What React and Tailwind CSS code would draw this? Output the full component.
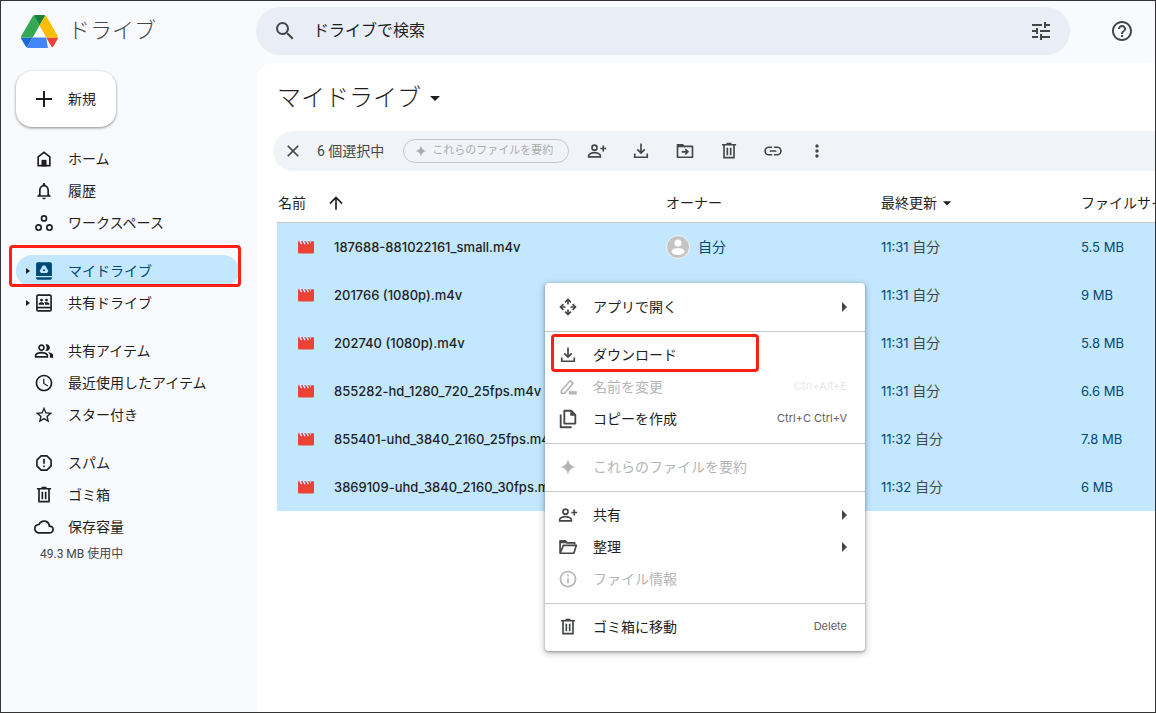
import { useState } from "react";
import clsx from "clsx";
import {
  MdSearch,
  MdTune,
  MdHelpOutline,
  MdNotificationsNone,
  MdAccessTime,
  MdStarBorder,
  MdCloudQueue,
  MdClose,
  MdArrowUpward,
  MdMoreVert,
  MdInfoOutline,
  MdArrowDropDown,
} from "react-icons/md";

function Svg({ size = 20, children }) {
  return (
    <svg
      width={size}
      height={size}
      viewBox="0 0 24 24"
      fill="none"
      stroke="currentColor"
      strokeWidth="2"
      className="shrink-0"
      aria-hidden="true"
    >
      {children}
    </svg>
  );
}

const HomeIcon = () => (
  <Svg>
    <path d="M5 20V9.500L12 4l7 5.500V20z" />
    <path d="M9 21v-8h6v8z" fill="currentColor" stroke="none" />
  </Svg>
);

const WorkspaceIcon = () => (
  <Svg>
    <circle cx="12" cy="6.500" r="3" />
    <circle cx="5.500" cy="17.500" r="3.200" />
    <circle cx="18.500" cy="17.500" r="3.200" />
  </Svg>
);

const MyDriveIcon = () => (
  <Svg>
    <path
      d="M4.500 1.500h15a2 2 0 0 1 2 2V18h-19V3.500a2 2 0 0 1 2-2zM10.500 5.500L6.800 12l1.500 2.500h7.400l1.500-2.500-3.700-6.500zM12 9.200l1.600 2.800h-3.200z"
      fill="currentColor"
      fillRule="evenodd"
      stroke="none"
    />
    <path
      d="M2.500 19.500h19v1a2 2 0 0 1-2 2h-15a2 2 0 0 1-2-2z"
      fill="currentColor"
      stroke="none"
    />
  </Svg>
);

const SharedDriveIcon = () => (
  <Svg>
    <rect x="3.500" y="2.500" width="17" height="19" rx="1.500" />
    <path d="M3.500 17.500h17" />
    <g fill="currentColor" stroke="none">
      <circle cx="9" cy="8.500" r="1.700" />
      <circle cx="15" cy="8.500" r="1.700" />
      <path d="M5.500 14v-1c0-1.300 2-2 3.500-2s3 .7 3 2v1zM13 14v-1c0-.8-.3-1.300-.8-1.800.9-.2 1.800-.2 2.800-.2 1.500 0 3.500.7 3.500 2v1z" />
    </g>
  </Svg>
);

const PeopleIcon = () => (
  <Svg>
    <path
      stroke="none"
      fill="currentColor"
      d="M16.670 13.130C18.040 14.060 19 15.320 19 17v3h4v-3c0-2.180-3.570-3.470-6.330-3.870zM15 12c2.210 0 4-1.790 4-4s-1.790-4-4-4c-.47 0-.91.1-1.330.24a5.980 5.980 0 0 1 0 7.520c.42.14.86.24 1.330.24zM9 12c2.210 0 4-1.790 4-4s-1.790-4-4-4-4 1.790-4 4 1.790 4 4 4zm0-6c1.100 0 2 .9 2 2s-.9 2-2 2-2-.9-2-2 .9-2 2-2zM9 13c-2.670 0-8 1.340-8 4v3h16v-3c0-2.660-5.330-4-8-4zm6 5H3v-.99C3.200 16.290 6.300 15 9 15s5.800 1.290 6 2v1z"
    />
  </Svg>
);

const SpamIcon = () => (
  <Svg>
    <path d="M8.500 3.500h7l5 5v7l-5 5h-7l-5-5v-7z" strokeLinejoin="round" />
    <path d="M12 7v6M12 15v2.200" />
  </Svg>
);

const TrashIcon = () => (
  <Svg>
    <path d="M3.500 4.500h17M9 3h6M6 5v15h12V5M10 8v9M14 8v9" />
  </Svg>
);

const PersonAddIcon = () => (
  <Svg>
    <circle cx="9" cy="8" r="3" />
    <path d="M2 19v-1.500C2 15.300 6 14 9 14s7 1.300 7 3.500V19z" />
    <path d="M19.500 5.500v7M16 9h7" />
  </Svg>
);

const DownloadIcon = () => (
  <Svg>
    <path d="M12 3v11M7.500 10l4.500 4.500 4.500-4.500M4.500 15v4.500h15V15" />
  </Svg>
);

const MoveIcon = () => (
  <Svg>
    <path d="M3 6v13.500h18V6.500H11L9 4.500H3z" strokeLinejoin="round" />
    <path d="M2.500 4h7l2.500 3.500H2.500z" fill="currentColor" stroke="none" />
    <path d="M8 13h7M12.300 9.800l3.200 3.200-3.200 3.200" />
  </Svg>
);

const LinkIcon = () => (
  <Svg>
    <path d="M11 7.500H7a4.500 4.500 0 0 0 0 9h4M13 7.500h4a4.500 4.500 0 0 1 0 9h-4M8 12h8" />
  </Svg>
);

const SparkIcon = ({ size = 20 }) => (
  <Svg size={size}>
    <path
      d="M12 2c.7 6 4 9.300 10 10-6 .7-9.300 4-10 10-.7-6-4-9.300-10-10 6-.7 9.300-4 10-10z"
      fill="currentColor"
      stroke="none"
    />
  </Svg>
);

const OpenWithIcon = () => (
  <Svg>
    <path d="M8.500 6.500L12 3l3.500 3.500M8.500 17.500L12 21l3.500-3.500M6.500 8.500L3 12l3.500 3.500M17.500 8.500L21 12l-3.500 3.500" />
    <path d="M12 3.500V9M12 15v5.500M3.500 12H9M15 12h5.500" />
  </Svg>
);

const RenameIcon = () => (
  <Svg>
    <path d="M4 19.500v-3L14.500 4.500l3.500 3L8 19.500z" strokeLinejoin="round" />
    <path d="M13 19h9.500" strokeWidth="4" />
  </Svg>
);

const CopyIcon = () => (
  <Svg size={22}>
    <path d="M8 3h7.500L20 7.500V17H8z" strokeLinejoin="round" />
    <path d="M14.500 3v5.500H20z" fill="currentColor" stroke="none" />
    <path d="M4 7v14h12" strokeLinejoin="round" />
  </Svg>
);

const FolderOpenIcon = () => (
  <Svg>
    <path d="M2.500 19V5h6.500l2 2H20v2" strokeLinejoin="round" />
    <path d="M2.500 19.500L6.500 10H22l-3 9.500z" strokeLinejoin="round" />
    <path d="M2 4h7l2.500 3.500H2z" fill="currentColor" stroke="none" />
  </Svg>
);

const MovieIcon = () => (
  <svg width="18" height="18" viewBox="0 0 18 18" aria-hidden="true">
    <path
      fill="#ea4335"
      d="M1 3.200h1.200l1.600 3h1.600l-1.600-3h1.800l1.600 3h1.600l-1.600-3h1.800l1.600 3h1.600l-1.600-3h1.800l1 2h.8l-1-2H17V14.200a1.300 1.300 0 0 1-1.300 1.300H2.300A1.300 1.300 0 0 1 1 14.200z"
    />
  </svg>
);

const DriveLogo = () => (
  <svg width="37" height="33" viewBox="0 0 87.3 78" aria-hidden="true">
    <path fill="#1967d2" d="m6.600 66.850 3.850 6.650c.8 1.400 1.950 2.500 3.300 3.300l13.750-23.800h-27.500c0 1.550.4 3.100 1.200 4.500z" />
    <path fill="#34a853" d="m43.650 25-13.750-23.800c-1.350.8-2.500 1.900-3.300 3.300l-25.400 44a9.060 9.060 0 0 0 -1.200 4.500h27.500z" />
    <path fill="#ea4335" d="m73.550 76.800c1.350-.8 2.500-1.900 3.300-3.300l1.600-2.750 7.650-13.250c.8-1.400 1.200-2.950 1.200-4.500h-27.502l5.852 11.500z" />
    <path fill="#188038" d="m43.650 25 13.750-23.800c-1.350-.8-2.900-1.200-4.500-1.200h-18.500c-1.600 0-3.150.45-4.500 1.200z" />
    <path fill="#4285f4" d="m59.800 53h-32.300l-13.750 23.800c1.350.8 2.900 1.200 4.500 1.200h45.200z" />
    <path fill="#fbbc04" d="m73.400 26.500-12.700-22c-.8-1.400-1.950-2.500-3.300-3.300l-13.750 23.800 16.150 28h27.450c0-1.550-.4-3.100-1.200-4.500z" />
  </svg>
);

const Caret = ({ className }) => (
  <svg viewBox="0 0 5 10" preserveAspectRatio="none" className={className} fill="currentColor" aria-hidden="true">
    <path d="M0 0l5 5-5 5z" />
  </svg>
);

const navGroups = [
  [
    { label: "ホーム", icon: <HomeIcon /> },
    { label: "履歴", icon: <MdNotificationsNone size={20} /> },
    { label: "ワークスペース", icon: <WorkspaceIcon /> },
  ],
  [
    { label: "マイドライブ", icon: <MyDriveIcon />, expandable: true, marked: true },
    { label: "共有ドライブ", icon: <SharedDriveIcon />, expandable: true },
  ],
  [
    { label: "共有アイテム", icon: <PeopleIcon /> },
    { label: "最近使用したアイテム", icon: <MdAccessTime size={20} /> },
    { label: "スター付き", icon: <MdStarBorder size={20} /> },
  ],
  [
    { label: "スパム", icon: <SpamIcon /> },
    { label: "ゴミ箱", icon: <TrashIcon /> },
    { label: "保存容量", icon: <MdCloudQueue size={20} /> },
  ],
];

const files = [
  { name: "187688-881022161_small.m4v", time: "11:31", size: "5.5 MB", owner: true },
  { name: "201766 (1080p).m4v", time: "11:31", size: "9 MB" },
  { name: "202740 (1080p).m4v", time: "11:31", size: "5.8 MB" },
  { name: "855282-hd_1280_720_25fps.m4v", time: "11:31", size: "6.6 MB" },
  { name: "855401-uhd_3840_2160_25fps.m4v", time: "11:32", size: "7.8 MB" },
  { name: "3869109-uhd_3840_2160_30fps.m4v", time: "11:32", size: "6 MB" },
];

const tools = [
  { label: "共有", icon: <PersonAddIcon /> },
  { label: "ダウンロード", icon: <DownloadIcon /> },
  { label: "移動", icon: <MoveIcon /> },
  { label: "削除", icon: <TrashIcon /> },
  { label: "リンクをコピー", icon: <LinkIcon /> },
  { label: "その他の操作", icon: <MdMoreVert size={20} /> },
];

const menuGroups = [
  [{ label: "アプリで開く", icon: <OpenWithIcon />, submenu: true }],
  [
    { label: "ダウンロード", icon: <DownloadIcon />, marked: true },
    { label: "名前を変更", icon: <RenameIcon />, keys: "Ctrl+Alt+E", disabled: true },
    { label: "コピーを作成", icon: <CopyIcon />, keys: "Ctrl+C Ctrl+V" },
  ],
  [{ label: "これらのファイルを要約", icon: <SparkIcon />, disabled: true }],
  [
    { label: "共有", icon: <PersonAddIcon />, submenu: true },
    { label: "整理", icon: <FolderOpenIcon />, submenu: true },
    { label: "ファイル情報", icon: <MdInfoOutline size={20} />, disabled: true },
  ],
  [{ label: "ゴミ箱に移動", icon: <TrashIcon />, keys: "Delete" }],
];

function Header() {
  return (
    <header className="flex h-[62px] shrink-0 items-start pt-1.5">
      <a
        href="#"
        className="flex h-12 w-[255px] shrink-0 items-center gap-2.5 pl-5 text-[22px] font-light text-[#444746]"
      >
        <DriveLogo />
        ドライブ
      </a>
      <form
        role="search"
        onSubmit={(e) => e.preventDefault()}
        className="flex h-12 flex-1 items-center rounded-full bg-[#e9eef6] pr-[17px] pl-[17px] text-[#444746]"
      >
        <button type="submit" aria-label="検索">
          <MdSearch size={24} />
        </button>
        <input
          type="text"
          aria-label="ドライブで検索"
          placeholder="ドライブで検索"
          className="ml-4 min-w-0 flex-1 bg-transparent text-base outline-none placeholder:text-[#1f1f1f]"
        />
        <button type="button" aria-label="検索オプション">
          <MdTune size={24} />
        </button>
      </form>
      <div className="flex h-12 w-[85px] shrink-0 items-center pl-10 text-[#444746]">
        <button type="button" aria-label="サポート">
          <MdHelpOutline size={24} />
        </button>
      </div>
    </header>
  );
}

function Sidebar({ active, onSelect }) {
  return (
    <aside className="w-64 shrink-0 pt-2 pl-[15px] pr-[18px]">
      <button
        type="button"
        className="mb-4 flex h-14 w-[100px] items-center gap-3 rounded-2xl bg-white pl-4 shadow-[0_1px_3px_rgba(0,0,0,0.45)]"
      >
        <Svg size={24}>
          <path d="M12 4v16M4 12h16" />
        </Svg>
        新規
      </button>
      <nav className="flex flex-col gap-4">
        {navGroups.map((group, i) => (
          <ul key={i}>
            {group.map((item) => (
              <li key={item.label} className="relative">
                <a
                  href="#"
                  onClick={() => onSelect(item.label)}
                  className={clsx(
                    "flex h-8 items-center rounded-full pl-2.5",
                    active === item.label && "bg-[#c2e7ff] text-[#004a77]"
                  )}
                >
                  <span className="w-2 shrink-0">
                    {item.expandable && <Caret className="h-1.5 w-1 text-[#1f1f1f]" />}
                  </span>
                  <span className="mr-3.5 flex w-5 shrink-0 justify-center">{item.icon}</span>
                  {item.label}
                </a>
                {item.marked && (
                  <span className="pointer-events-none absolute -top-2.5 -right-0.5 bottom-0 -left-[7px] rounded border-[3px] border-[#ff1f14]" />
                )}
              </li>
            ))}
          </ul>
        ))}
      </nav>
      <p className="pt-px pl-6 text-xs leading-5 text-[#444746]">49.3 MB 使用中</p>
    </aside>
  );
}

function SelectionBar() {
  return (
    <div className="ml-4 flex h-10 items-center rounded-l-full bg-[#f0f4f9] pl-2 text-[#444746]">
      <button type="button" aria-label="選択を解除" className="flex w-6 justify-center">
        <MdClose size={20} />
      </button>
      <span className="ml-3 whitespace-nowrap">6 個選択中</span>
      <button
        type="button"
        disabled
        className="mr-3 ml-[19px] flex h-6 w-[166px] items-center gap-1 rounded-full border border-[#c4c7c5] pl-2.5 text-[11px] whitespace-nowrap text-[#aaadac]"
      >
        <SparkIcon size={14} />
        これらのファイルを要約
      </button>
      <div className="flex gap-3">
        {tools.map((tool) => (
          <button
            key={tool.label}
            type="button"
            aria-label={tool.label}
            className="flex h-8 w-8 items-center justify-center"
          >
            {tool.icon}
          </button>
        ))}
      </div>
    </div>
  );
}

function FileTable() {
  return (
    <div className="pl-5">
      <table className="w-full table-fixed border-separate border-spacing-0 text-left whitespace-nowrap">
        <colgroup>
          <col />
          <col className="w-[215px]" />
          <col className="w-[200px]" />
          <col className="w-[74px]" />
        </colgroup>
        <thead>
          <tr className="h-[52px]">
            <th className="border-b border-[#c4c7c5] pt-3 pl-px font-normal">
              <button type="button" className="flex items-center gap-5">
                名前
                <MdArrowUpward size={20} />
              </button>
            </th>
            <th className="border-b border-[#c4c7c5] pt-3 font-normal">オーナー</th>
            <th className="border-b border-[#c4c7c5] pt-3 font-normal">
              <button type="button" className="flex items-center">
                最終更新
                <MdArrowDropDown size={20} />
              </button>
            </th>
            <th className="overflow-hidden border-b border-[#c4c7c5] pt-3 font-normal">
              ファイルサイズ
            </th>
          </tr>
        </thead>
        <tbody className="font-['Inter','Noto_Sans_CJK_JP',sans-serif] text-[13px]">
          {files.map((file) => (
            <tr key={file.name} className="h-12 bg-[#c2e7ff] text-[#004a77]">
              <td className="overflow-hidden">
                <span className="flex items-center gap-[19px] pl-5 font-medium text-[#1f1f1f]">
                  <MovieIcon />
                  {file.name}
                </span>
              </td>
              <td className="text-sm">
                {file.owner && (
                  <span className="flex items-center gap-2">
                    <svg width="24" height="24" viewBox="0 0 24 24" aria-hidden="true">
                      <circle cx="12" cy="12" r="11.500" fill="#c4c4c4" stroke="#f4f4f4" />
                      <circle cx="12" cy="8" r="3.500" fill="#fff" />
                      <ellipse cx="12" cy="16.500" rx="6.500" ry="3.500" fill="#fff" />
                    </svg>
                    自分
                  </span>
                )}
              </td>
              <td>
                {file.time} <span className="text-sm text-[#444746]">自分</span>
              </td>
              <td>{file.size}</td>
            </tr>
          ))}
        </tbody>
      </table>
    </div>
  );
}

function ContextMenu() {
  return (
    <div
      role="menu"
      className="absolute top-[220px] left-72 w-80 rounded bg-white shadow-[0_2px_6px_2px_rgba(0,0,0,0.15),0_1px_3px_rgba(0,0,0,0.35)]"
    >
      {menuGroups.map((group, i) => (
        <div key={i} className={clsx("pb-2", i === 0 ? "pt-2" : "border-t border-[#c4c7c5] pt-[7px]")}>
          {group.map((item) => (
            <div key={item.label} className="relative">
              <button
                type="button"
                role="menuitem"
                disabled={item.disabled}
                className={clsx(
                  "flex h-8 w-full items-center pr-[18px] pl-3",
                  item.disabled ? "text-[#b4b5b5]" : "text-[#1f1f1f]"
                )}
              >
                <span
                  className={clsx(
                    "mr-3.5 flex w-[22px] shrink-0 justify-center",
                    !item.disabled && "text-[#444746]"
                  )}
                >
                  {item.icon}
                </span>
                {item.label}
                {item.submenu && <Caret className="ml-auto h-2.5 w-[5px] text-[#444746]" />}
                {item.keys && (
                  <span
                    className={clsx(
                      "ml-auto font-['Inter',sans-serif] text-[11px]",
                      item.disabled ? "text-[#e8e8e8]" : "text-[#5f6160]"
                    )}
                  >
                    {item.keys}
                  </span>
                )}
              </button>
              {item.marked && (
                <span className="pointer-events-none absolute -top-[5px] -bottom-px left-1.5 w-52 rounded border-[3px] border-[#ff1f14]" />
              )}
            </div>
          ))}
        </div>
      ))}
    </div>
  );
}

export default function App() {
  const [active, setActive] = useState("マイドライブ");

  return (
    <div className="flex min-h-screen flex-col overflow-hidden border border-[#333333] bg-[#f8fafd] font-['Roboto','Noto_Sans_CJK_JP',sans-serif] text-sm text-[#1f1f1f]">
      <Header />
      <div className="flex flex-1">
        <Sidebar active={active} onSelect={setActive} />
        <main className="relative min-w-0 flex-1 overflow-hidden rounded-tl-2xl bg-white">
          <h1 className="flex h-[68px] items-center pt-0.5 pl-5 text-2xl font-light">
            <button type="button" className="flex items-center gap-0.5">
              マイドライブ
              <MdArrowDropDown size={24} />
            </button>
          </h1>
          <SelectionBar />
          <FileTable />
          <ContextMenu />
        </main>
      </div>
    </div>
  );
}
